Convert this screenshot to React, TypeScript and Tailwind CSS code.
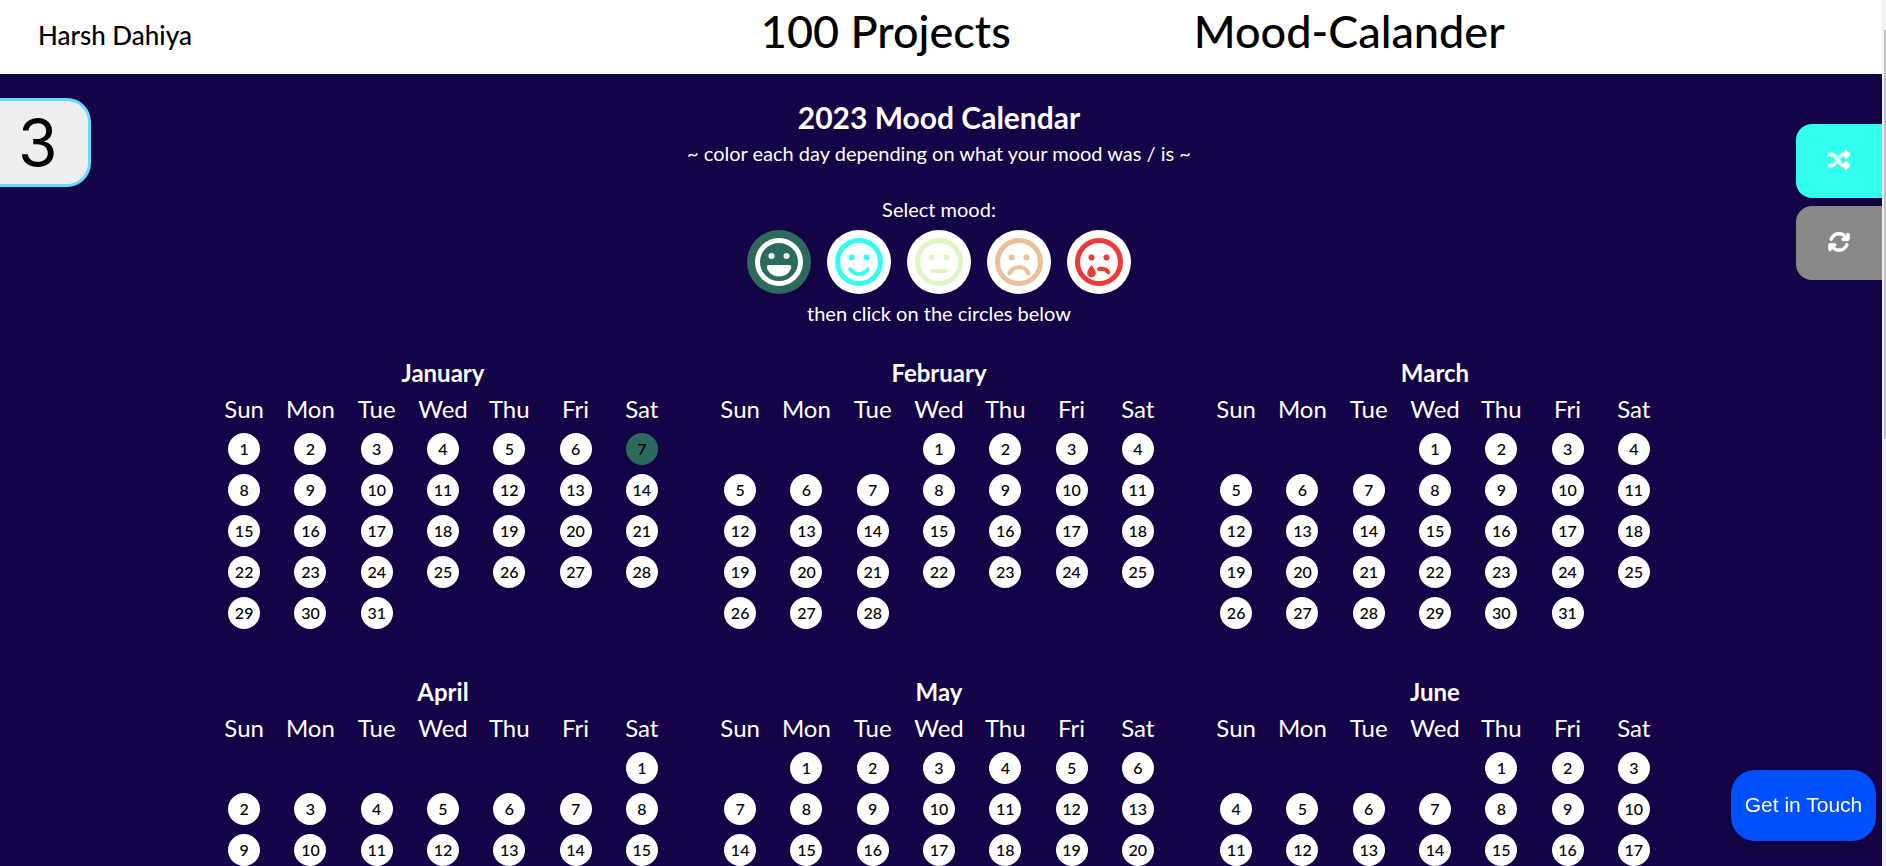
import { useState } from "react";
import { FaShuffle, FaArrowsRotate } from "react-icons/fa6";

const DAYS = ["Sun", "Mon", "Tue", "Wed", "Thu", "Fri", "Sat"];

const MONTHS = [
  { name: "January", start: 0, days: 31 },
  { name: "February", start: 3, days: 28 },
  { name: "March", start: 3, days: 31 },
  { name: "April", start: 6, days: 30 },
  { name: "May", start: 1, days: 31 },
  { name: "June", start: 4, days: 30 },
];

const eyes = (
  <g fill="currentColor" stroke="none">
    <circle cx="16.5" cy="19.6" r="3" />
    <circle cx="31.5" cy="19.6" r="3" />
  </g>
);

const MOODS = [
  {
    name: "Very happy",
    color: "#2d6a5d",
    face: (
      <g fill="currentColor" stroke="none">
        <circle cx="16.5" cy="18" r="3" />
        <circle cx="31.5" cy="18" r="3" />
        <path d="M13.5 27h21c1.2 0 1.9 1 1.7 2.2C35.200 34.500 30 38.500 24 38.500s-11.200-4-12.200-9.300C11.600 28 12.300 27 13.500 27z" />
      </g>
    ),
  },
  {
    name: "Happy",
    color: "#33ffec",
    face: (
      <>
        {eyes}
        <path d="M15.3 31.300c4.400 6.200 13 6.200 17.400 0" />
      </>
    ),
  },
  {
    name: "Neutral",
    color: "#dff5c4",
    face: (
      <>
        {eyes}
        <path d="M17 33h14" />
      </>
    ),
  },
  {
    name: "Sad",
    color: "#edbf98",
    face: (
      <>
        {eyes}
        <path d="M14.500 35.500c3.300-8.400 15.700-8.400 19 0" />
      </>
    ),
  },
  {
    name: "Very sad",
    color: "#ee3a36",
    face: (
      <>
        {eyes}
        <path d="M24 31c4-.5 7.600.5 9.300 3.300" />
        <path d="M16.500 27c1.800 2.600 4.300 5.500 4.300 8a4.300 4.300 0 0 1-8.600 0c0-2.500 2.500-5.400 4.300-8z" fill="currentColor" stroke="none" />
      </>
    ),
  },
];

function MoodButton({ mood, selected, onSelect }: { mood: (typeof MOODS)[number]; selected: boolean; onSelect: () => void }) {
  return (
    <button
      type="button"
      aria-label={mood.name}
      aria-pressed={selected}
      onClick={onSelect}
      className="flex size-16 items-center justify-center rounded-full"
      style={{ backgroundColor: selected ? mood.color : "#ffffff", color: selected ? "#ffffff" : mood.color }}
    >
      <svg viewBox="0 0 48 48" className="size-12" fill="none" stroke="currentColor" strokeWidth="4" strokeLinecap="round" aria-hidden="true">
        <circle cx="24" cy="24" r="21.500" strokeWidth="5" />
        {mood.face}
      </svg>
    </button>
  );
}

export default function App() {
  const [mood, setMood] = useState(0);
  const [colored, setColored] = useState<Record<string, string>>({ "January-7": MOODS[0].color });

  const shuffle = () => {
    const next: Record<string, string> = {};
    MONTHS.forEach((m) => {
      for (let d = 1; d <= m.days; d++) {
        next[`${m.name}-${d}`] = MOODS[Math.floor(Math.random() * MOODS.length)].color;
      }
    });
    setColored(next);
  };

  return (
    <div className="flex h-screen overflow-hidden bg-[#140447] font-['Lato',sans-serif] text-white">
      <div className="h-full min-w-0 flex-1 overflow-y-auto [scrollbar-width:none]">
        <header className="grid h-[74px] grid-cols-[40%_23%_1fr] items-center bg-white font-medium text-black">
          <a href="#home" className="pb-1 pl-[38px] text-[26px] leading-8">Harsh Dahiya</a>
          <h2 className="pb-3 pl-2 text-[45px] leading-12">100 Projects</h2>
          <h2 className="pb-3 pl-2 text-[45px] leading-12">Mood-Calander</h2>
        </header>

        <main className="flex flex-col items-center pt-[23px] pr-11 pl-10">
          <h1 className="text-[30px] leading-10 font-bold">2023 Mood Calendar</h1>
          <p className="mt-1 text-xl leading-6">~ color each day depending on what your mood was / is ~</p>
          <p className="mt-8 text-xl leading-6">Select mood:</p>
          <div className="mt-[9px] flex gap-4">
            {MOODS.map((m, i) => (
              <MoodButton key={m.name} mood={m} selected={i === mood} onSelect={() => setMood(i)} />
            ))}
          </div>
          <p className="mt-[7px] text-xl leading-6">then click on the circles below</p>

          <div className="mt-8 grid w-full max-w-[1456px] grid-cols-3 gap-x-8 gap-y-[43px]">
            {MONTHS.map((m) => (
              <section key={m.name} className="text-center">
                <h3 className="text-2xl leading-8 font-bold">{m.name}</h3>
                <div className="mt-1 grid grid-cols-7 text-2xl leading-8">
                  {DAYS.map((d) => (
                    <span key={d}>{d}</span>
                  ))}
                </div>
                <div className="mt-[3px] grid grid-cols-7 justify-items-center">
                  {Array.from({ length: m.start }, (_, i) => (
                    <span key={`blank-${i}`} />
                  ))}
                  {Array.from({ length: m.days }, (_, i) => {
                    const key = `${m.name}-${i + 1}`;
                    return (
                      <div key={key} className="flex h-[41px] items-center">
                        <button
                          type="button"
                          aria-label={`${m.name} ${i + 1}`}
                          onClick={() => setColored({ ...colored, [key]: MOODS[mood].color })}
                          className="flex size-8 items-center justify-center rounded-full text-base font-medium text-black"
                          style={{ backgroundColor: colored[key] ?? "#ffffff" }}
                        >
                          {i + 1}
                        </button>
                      </div>
                    );
                  })}
                </div>
              </section>
            ))}
          </div>
        </main>
      </div>

      <div className="h-full w-1 shrink-0 bg-[#f1f1f1] pt-[30px] pl-0.5" aria-hidden="true">
        <div className="h-[409px] bg-[#c1c1c1]" />
      </div>

      <div className="fixed top-[98px] left-0 flex h-[89px] w-[91px] items-center rounded-r-3xl border-3 border-l-0 border-[#62dcff] bg-[#efefef] pl-[18px] font-['Inter',sans-serif] text-[64px] text-black">
        3
      </div>

      <div className="fixed top-[124px] right-1 flex flex-col gap-2 text-[22px]">
        <button type="button" aria-label="Randomize" onClick={shuffle} className="flex h-[74px] w-[86px] items-center justify-center rounded-l-2xl bg-[#33ffec] pb-0.5">
          <FaShuffle stroke="currentColor" strokeWidth="20" />
        </button>
        <button type="button" aria-label="Clear" onClick={() => setColored({})} className="flex h-[74px] w-[86px] items-center justify-center rounded-l-2xl bg-[#888888] pb-0.5">
          <FaArrowsRotate stroke="currentColor" strokeWidth="20" />
        </button>
      </div>

      <a href="#contact" className="fixed right-[10px] bottom-[25px] flex h-[71px] w-[145px] items-center justify-center rounded-3xl bg-[#0050ff] pb-0.5 font-['Liberation_Sans',sans-serif] text-[21px] shadow-lg">
        Get in Touch
      </a>
    </div>
  );
}
